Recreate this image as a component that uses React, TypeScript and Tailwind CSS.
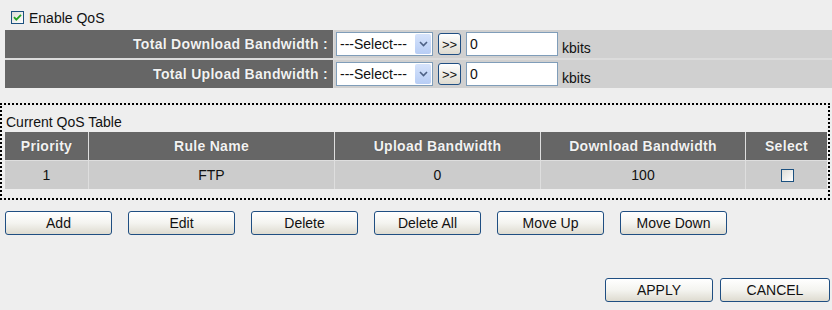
import React from 'react';

const XpButton: React.FC<{ label: string; className?: string }> = ({ label, className = '' }) => (
  <button
    className={`h-[24px] rounded-[3px] border border-[#1f4e82] bg-gradient-to-b from-[#ffffff] via-[#f4f4f0] to-[#dedbd0] text-[14px] leading-none text-[#111] ${className}`}
  >
    {label}
  </button>
);

const XpCheckbox: React.FC<{ checked?: boolean }> = ({ checked }) => (
  <span className="flex h-[13px] w-[13px] items-center justify-center border border-[#1c5180] bg-gradient-to-br from-[#dcdcd6] to-[#ffffff]">
    {checked && (
      <svg width="9" height="9" viewBox="0 0 9 9">
        <path d="M1 4.2 L3.3 6.6 L8 1.8" fill="none" stroke="#21a121" strokeWidth="1.8" />
      </svg>
    )}
  </span>
);

const BandwidthRow: React.FC<{ label: string }> = ({ label }) => (
  <>
    <div className="flex h-[28px] items-center justify-end bg-[#666666] pr-[5px] text-[14px] font-bold tracking-[0.3px] text-[#f2f2f2] [text-shadow:0_0_1px_#444]">
      {label}
    </div>
    <div className="flex h-[28px] items-center bg-[#d0d0d0] pl-[2px]">
      {/* select */}
      <div className="flex h-[24px] w-[97px] items-center justify-between border border-[#7f9db9] bg-white pl-[3px] pr-[1px]">
        <span>---Select---</span>
        <span className="flex h-[20px] w-[16px] items-center justify-center rounded-[2px] bg-gradient-to-b from-[#d6e3fb] to-[#b7cdf5]">
          <svg width="9" height="6" viewBox="0 0 9 6">
            <path d="M1 1 L4.5 4.5 L8 1" fill="none" stroke="#4d6185" strokeWidth="1.6" />
          </svg>
        </span>
      </div>
      <button className="ml-[5px] flex h-[22px] w-[23px] items-center justify-center rounded-[3px] border border-[#1f4e82] bg-gradient-to-b from-[#ffffff] to-[#dedbd0] text-[13px] leading-none">
        &gt;&gt;
      </button>
      <div className="ml-[5px] flex h-[24px] w-[92px] items-center border border-[#7f9db9] bg-white pl-[3px]">0</div>
      <span className="ml-[4px] mt-[8px]">kbits</span>
    </div>
  </>
);

const cols = ['Priority', 'Rule Name', 'Upload Bandwidth', 'Download Bandwidth', 'Select'];

export default function App() {
  return (
    <div className="h-[310px] w-[832px] overflow-hidden bg-[#eeeeee] font-['Liberation_Sans',Arial,sans-serif] text-[14px] text-[#111]">
      <div className="flex h-[30px] items-start gap-[5px] pl-[11px] pt-[11px] leading-[15px]">
        <XpCheckbox checked />
        <span>Enable QoS</span>
      </div>

      <div className="ml-[5px] grid grid-cols-[328px_1fr] gap-x-px gap-y-[2px] bg-[#dcdcdc]">
        <BandwidthRow label="Total Download Bandwidth :" />
        <BandwidthRow label="Total Upload Bandwidth :" />
      </div>

      <div className="mt-[15px] w-[830px] border-2 border-dotted border-black pb-[9px] pl-[3px] pr-[1px] pt-[9px]">
        <div className="pl-[1px] leading-[16px]">Current QoS Table</div>
        <div className="mt-[2px] grid grid-cols-[83px_245px_205px_204px_81px] gap-px bg-[#dedede]">
          {cols.map(c => (
            <div
              key={c}
              className="flex h-[28px] items-center justify-center bg-[#666666] font-bold tracking-[0.3px] text-[#f2f2f2] [text-shadow:0_0_1px_#444]"
            >
              {c}
            </div>
          ))}
          <div className="flex h-[28px] items-center justify-center bg-[#cccccc]">1</div>
          <div className="flex h-[28px] items-center justify-center bg-[#cccccc]">FTP</div>
          <div className="flex h-[28px] items-center justify-center bg-[#cccccc]">0</div>
          <div className="flex h-[28px] items-center justify-center bg-[#cccccc]">100</div>
          <div className="flex h-[28px] items-center justify-center bg-[#cccccc] pl-[2px]">
            <XpCheckbox />
          </div>
        </div>
      </div>

      <div className="ml-[5px] mt-[11px] flex gap-[16px]">
        {['Add', 'Edit', 'Delete', 'Delete All', 'Move Up', 'Move Down'].map(b => (
          <XpButton key={b} label={b} className="w-[107px]" />
        ))}
      </div>

      <div className="mt-[43px] flex justify-end gap-[7px] pr-[2px]">
        <XpButton label="APPLY" className="w-[108px]" />
        <XpButton label="CANCEL" className="w-[110px]" />
      </div>
    </div>
  );
}
